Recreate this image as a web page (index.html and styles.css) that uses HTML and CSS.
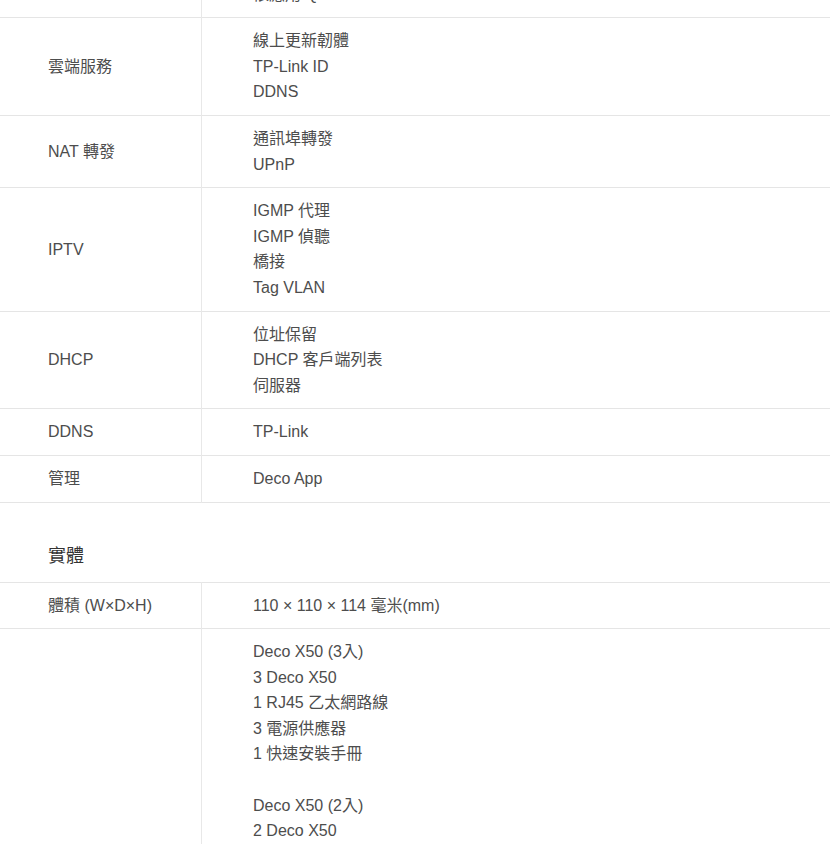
FILE: index.html
```html
<!DOCTYPE html>
<html lang="zh-Hant">
<head>
<meta charset="utf-8">
<title>規格</title>
<link rel="stylesheet" href="styles.css">
</head>
<body>
<div class="page">
  <table class="spec">
    <tr>
      <td class="label">服務品質</td>
      <td class="value">依裝置 QoS<br>依應用 QoS</td>
    </tr>
    <tr>
      <td class="label">雲端服務</td>
      <td class="value">線上更新韌體<br>TP-Link ID<br>DDNS</td>
    </tr>
    <tr>
      <td class="label">NAT 轉發</td>
      <td class="value">通訊埠轉發<br>UPnP</td>
    </tr>
    <tr>
      <td class="label">IPTV</td>
      <td class="value">IGMP 代理<br>IGMP 偵聽<br>橋接<br>Tag VLAN</td>
    </tr>
    <tr>
      <td class="label">DHCP</td>
      <td class="value">位址保留<br>DHCP 客戶端列表<br>伺服器</td>
    </tr>
    <tr>
      <td class="label">DDNS</td>
      <td class="value">TP-Link</td>
    </tr>
    <tr>
      <td class="label">管理</td>
      <td class="value">Deco App</td>
    </tr>
  </table>

  <h3 class="section-title">實體</h3>

  <table class="spec spec-top">
    <tr>
      <td class="label">體積 (W×D×H)</td>
      <td class="value">110 × 110 × 114 毫米(mm)</td>
    </tr>
    <tr>
      <td class="label">包裝內容</td>
      <td class="value">Deco X50 (3入)<br>3 Deco X50<br>1 RJ45 乙太網路線<br>3 電源供應器<br>1 快速安裝手冊<br><br>Deco X50 (2入)<br>2 Deco X50<br>1 RJ45 乙太網路線<br>2 電源供應器<br>1 快速安裝手冊<br><br>Deco X50 (1入)<br>1 Deco X50<br>1 RJ45 乙太網路線<br>1 電源供應器<br>1 快速安裝手冊</td>
    </tr>
  </table>
</div>
</body>
</html>
```

FILE: styles.css
```css
html, body {
  margin: 0;
  padding: 0;
  background: #ffffff;
}

body {
  font-family: "Liberation Sans", Arial, "Noto Sans CJK TC", sans-serif;
  font-size: 16px;
  color: #4d4d4d;
}

.page {
  margin-top: -54px;
}

.spec {
  width: 100%;
  border-collapse: collapse;
  border-spacing: 0;
}

.spec-top {
  border-top: 1px solid #e5e5e5;
}

.spec tr {
  border-bottom: 1px solid #e5e5e5;
}

.spec td {
  padding: 10px 0;
  line-height: 25.6px;
  vertical-align: middle;
}

.spec .label {
  width: 153px;
  padding-left: 48px;
  border-right: 1px solid #e8e8e8;
}

.spec .value {
  padding-left: 51px;
}

.section-title {
  margin: 0;
  padding: 40px 48px 12px;
  font-size: 18px;
  line-height: 27px;
  font-weight: normal;
  color: #333333;
}
```
